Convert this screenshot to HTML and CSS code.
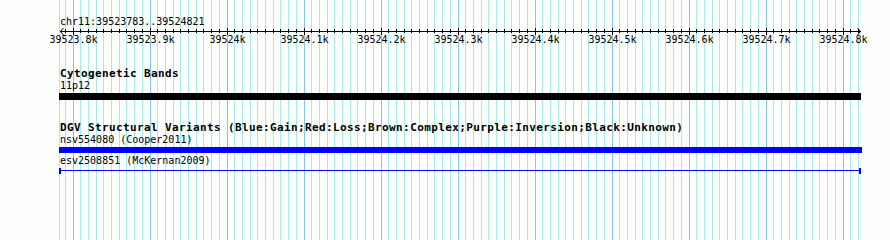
FILE: index.html
```html
<!DOCTYPE html>
<html>
<head>
    <title>chr11:39523783..39524821</title>
    <link rel="stylesheet" href="styles.css">
</head>
<body>
    <div class="browser">
        <svg class="grid" id="grid" width="890" height="240"></svg>

        <svg class="ruler" id="ruler" width="890" height="50">
            <text class="ruler-name" x="60" y="25">chr11:39523783..39524821</text>
        </svg>

        <div class="track band-track">
            <div class="track-title">Cytogenetic Bands</div>
            <div class="feature-label">11p12</div>
            <div class="band-bar"></div>
        </div>

        <div class="track dgv-track">
            <div class="track-title">DGV Structural Variants (Blue:Gain;Red:Loss;Brown:Complex;Purple:Inversion;Black:Unknown)</div>
            <div class="feature-label">nsv554080 (Cooper2011)</div>
            <div class="gain-bar"></div>
            <div class="feature-label second">esv2508851 (McKernan2009)</div>
            <div class="segment"></div>
        </div>
    </div>

    <script>
        const start = 39523783;
        const end = 39524821;
        const left = 60;
        const width = 800;
        const svgNS = "http://www.w3.org/2000/svg";

        const grid = document.getElementById("grid");
        const ruler = document.getElementById("ruler");

        function toX(bp) {
            return Math.floor(left + (bp - start) * width / (end - start + 1));
        }

        function addRect(svg, x, y, w, h, cls) {
            let r = document.createElementNS(svgNS, "rect");
            r.setAttribute("x", x);
            r.setAttribute("y", y);
            r.setAttribute("width", w);
            r.setAttribute("height", h);
            r.setAttribute("class", cls);
            svg.appendChild(r);
        }

        // grid lines every 10bp, darker every 100bp
        addRect(grid, 59, 0, 1, 240, "grid-minor");
        for (let bp = 39523790; bp <= end; bp += 10) {
            const x = toX(bp);
            const major = bp % 100 === 0;
            addRect(grid, x, 0, 1, 240, major ? "grid-major" : "grid-minor");

            addRect(ruler, x, major ? 28 : 29, 1, major ? 7 : 4, "tick");

            if (major) {
                let label = document.createElementNS(svgNS, "text");
                label.setAttribute("x", x + 0.5);
                label.setAttribute("y", 43);
                label.setAttribute("class", "tick-label");
                label.textContent = (bp / 1000).toFixed(bp % 1000 === 0 ? 0 : 1) + "k";
                ruler.appendChild(label);
            }
        }

        // ruler line with arrow heads
        addRect(ruler, 60, 31, 801, 1, "tick");
        let arrows = document.createElementNS(svgNS, "path");
        arrows.setAttribute("d", "M63.5 28 L60.5 31.5 L63.5 35 M857.5 28 L860.5 31.5 L857.5 35");
        arrows.setAttribute("class", "arrow");
        ruler.appendChild(arrows);
    </script>
</body>
</html>
```

FILE: styles.css
```css
body {
    margin: 0;
    font-family: "DejaVu Sans Mono", "Liberation Mono", monospace;
}

.browser {
    position: relative;
    width: 890px;
    height: 240px;
    background-color: #fbfefb;
    overflow: hidden;
}

.grid {
    position: absolute;
    top: 0;
    left: 0;
}

.grid-minor {
    fill: #a8eaec;
}

.grid-major {
    fill: #84c8e8;
}

.ruler {
    display: block;
    position: relative;
}

.ruler-name,
.tick-label {
    font-family: "DejaVu Sans Mono", monospace;
    font-size: 10px;
    fill: #000;
}

.tick-label {
    text-anchor: middle;
}

.tick {
    fill: #000;
}

.arrow {
    fill: none;
    stroke: #000;
    stroke-width: 1;
}

.track {
    position: relative;
    padding-left: 59px;
}

.band-track {
    margin-top: 18px;
}

.dgv-track {
    margin-top: 22px;
}

.track-title {
    font-size: 11px;
    font-weight: bold;
    letter-spacing: 0.38px;
    line-height: 12px;
    padding-left: 1px;
    white-space: nowrap;
    color: #000;
}

.feature-label {
    font-size: 10px;
    line-height: 12px;
    padding-left: 1px;
    white-space: nowrap;
    color: #000;
}

.feature-label.second {
    margin-top: 2px;
}

.band-bar {
    width: 802px;
    height: 7px;
    margin-top: 1px;
    background-color: #000;
}

.gain-bar {
    width: 803px;
    height: 6px;
    margin-top: 1px;
    background-color: #0000ff;
}

.segment {
    box-sizing: border-box;
    width: 802px;
    height: 6px;
    margin-top: 1px;
    border-left: 2px solid #0000ff;
    border-right: 2px solid #0000ff;
    background: linear-gradient(to bottom, transparent 2px, #0000ff 2px, #0000ff 3px, transparent 3px);
}
```
